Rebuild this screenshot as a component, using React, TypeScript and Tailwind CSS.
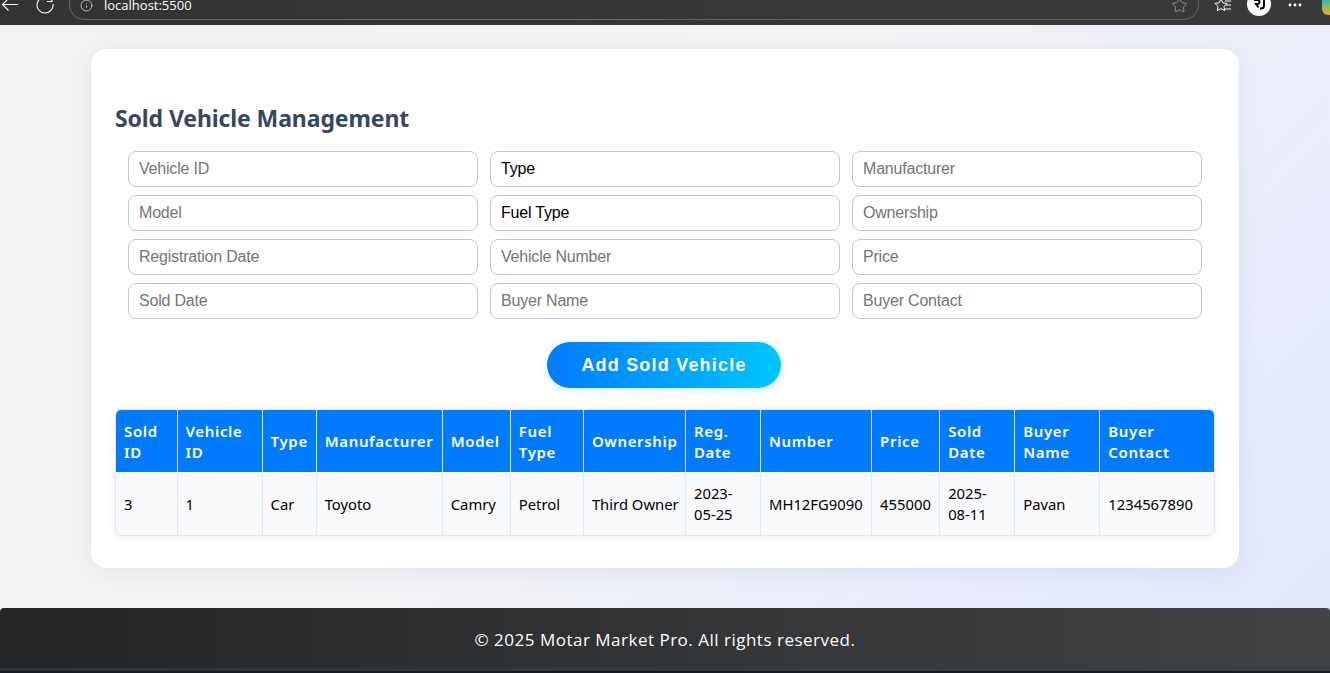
import { Info, Star } from "lucide-react";

const fields = [
  { label: "Vehicle ID" },
  { label: "Type", select: true },
  { label: "Manufacturer" },
  { label: "Model" },
  { label: "Fuel Type", select: true },
  { label: "Ownership" },
  { label: "Registration Date" },
  { label: "Vehicle Number" },
  { label: "Price" },
  { label: "Sold Date" },
  { label: "Buyer Name" },
  { label: "Buyer Contact" },
];

const columns = [
  { label: "Sold ID", value: "3", width: "w-[61px]" },
  { label: "Vehicle ID", value: "1", width: "w-[85px]" },
  { label: "Type", value: "Car", width: "w-[54px]" },
  { label: "Manufacturer", value: "Toyoto", width: "w-[126px]" },
  { label: "Model", value: "Camry", width: "w-[68px]" },
  { label: "Fuel Type", value: "Petrol", width: "w-[73px]" },
  { label: "Ownership", value: "Third\u00a0Owner", width: "w-[102px]" },
  { label: "Reg. Date", value: "2023-05-25", width: "w-[75px]" },
  { label: "Number", value: "MH12FG9090", width: "w-[111px]" },
  { label: "Price", value: "455000", width: "w-[68px]" },
  { label: "Sold Date", value: "2025-08-11", width: "w-[75px]" },
  { label: "Buyer Name", value: "Pavan", width: "w-[85px]" },
  { label: "Buyer Contact", value: "1234567890", width: "w-[114px]" },
];

function TopBar() {
  return (
    <div className="flex h-[25px] items-start overflow-hidden bg-[linear-gradient(90deg,#333333,#3a3a3a)] text-white">
      <svg className="ml-[1px] h-[12px] w-[18px]" viewBox="0 0 18 12" fill="none" stroke="white" strokeWidth="1.1">
        <path d="M17 4.5H1.5M7.5-1.5l-6 6 6 6" />
      </svg>
      <svg className="ml-[17px] h-[14px] w-[18px]" viewBox="0 0 18 14" fill="none" stroke="white" strokeWidth="1.1">
        <path d="M17 4A8 8 0 1 1 12-2.4M11 1.5h5V-3" />
      </svg>
      <div className="mt-[-10px] ml-[15px] flex h-[30px] w-[1130px] items-center rounded-b-[15px] border border-[#666666] px-[10px]">
        <Info className="mt-[1px] h-[13px] w-[13px] text-[#d8d8d8]" strokeWidth={1.5} />
        <span className="mt-[1px] ml-[11px] font-['Open_Sans',sans-serif] text-[13px] leading-none">localhost:5500</span>
        <Star className="mt-[1px] ml-auto h-[17px] w-[17px] text-[#9a9a9a]" strokeWidth={1.2} />
      </div>
      <svg className="ml-[15px] h-[14px] w-[18px]" viewBox="0 0 18 14" fill="none" stroke="white" strokeWidth="1">
        <path d="M7 -1l1.8 3.8 4.2.6-3 3 .7 4.2L7 8.6l-3.7 2 .7-4.2-3-3 4.2-.6z" />
        <path d="M11 1h6M12 5h5M11 9h6" />
      </svg>
      <div className="mt-[-8px] ml-[15px] flex h-[24px] w-[24px] items-center justify-center rounded-full bg-white">
        <svg className="mt-[1px] h-[13px] w-[13px]" viewBox="0 0 13 13" fill="none" stroke="black" strokeWidth="1.9">
          <path d="M1 2h3.5a2 2 0 0 1 0 4H3l2.5 3.5M11 1v6.5a3 3 0 0 1-3 3H7" />
        </svg>
      </div>
      <svg className="mt-[3px] ml-[17px] h-[4px] w-[14px]" viewBox="0 0 14 4" fill="white">
        <circle cx="2" cy="2" r="1.4" />
        <circle cx="7" cy="2" r="1.4" />
        <circle cx="12" cy="2" r="1.4" />
      </svg>
      <div className="ml-auto h-[15px] w-[8px] rounded-bl-[6px] bg-[linear-gradient(180deg,#3fb6b0_0%,#86c14a_45%,#f2a23a_100%)]" />
    </div>
  );
}

function Field({ label, select }: { label: string; select?: boolean }) {
  const cls =
    "h-9 w-full appearance-none rounded-[8px] border border-[#bcc7da] bg-white px-[10px] font-['Liberation_Sans',Arial,sans-serif] text-base tracking-[-0.2px] text-black outline-none placeholder:text-[#757575]";
  if (select) {
    return (
      <select className={cls} defaultValue={label}>
        <option>{label}</option>
      </select>
    );
  }
  return <input className={cls} placeholder={label} />;
}

export default function App() {
  return (
    <div className="flex h-[673px] flex-col overflow-hidden bg-[#0f1c2e] font-['Open_Sans','Noto_Sans',sans-serif]">
      <TopBar />
      <main className="h-[646px] bg-[linear-gradient(135deg,#f2f2f2_0%,#f3f3f4_45%,#e0e7ff_100%)]">
        <div className="mx-auto mt-6 w-[1148px] rounded-2xl bg-white px-6 pt-[44px] pb-8 shadow-[0_4px_24px_rgba(60,80,140,0.08)]">
          <h2 className="font-['Noto_Sans',sans-serif] text-[23px] leading-[50px] font-bold tracking-[-0.1px] text-[#34495e]">
            Sold Vehicle Management
          </h2>
          <div className="mx-[13px] mt-[8px] grid grid-cols-3 gap-x-3 gap-y-2">
            {fields.map((f) => (
              <Field key={f.label} label={f.label} select={f.select} />
            ))}
          </div>
          <div className="mt-[23px] flex justify-center pr-[2px]">
            <button className="h-[46px] w-[234px] rounded-full bg-[linear-gradient(90deg,#007bff,#00c6ff)] font-['Liberation_Sans',Arial,sans-serif] text-lg font-bold tracking-[1.2px] text-white shadow-[0_2px_8px_rgba(0,123,255,0.15)]">
              Add Sold Vehicle
            </button>
          </div>
          <div className="mt-[21px] overflow-hidden rounded-[6px] border border-[#e3e7ef] shadow-[0_2px_8px_rgba(0,0,0,0.06)]">
            <table className="w-full table-fixed border-collapse font-['Noto_Sans',sans-serif]">
              <thead>
                <tr className="h-[62px] bg-[#007bff] text-white">
                  {columns.map((c) => (
                    <th
                      key={c.label}
                      className={`${c.width} border-r border-[#e3e7ef] px-2 pt-[1px] text-left text-[15px] leading-[21px] font-semibold tracking-[0.65px] last:border-r-0`}
                    >
                      {c.label}
                    </th>
                  ))}
                </tr>
              </thead>
              <tbody>
                <tr className="h-[63px] bg-[#f8f9fb] text-black">
                  {columns.map((c) => (
                    <td
                      key={c.label}
                      className="border-r border-[#e3e7ef] px-2 pt-[1px] text-[14.8px] leading-[21px] last:border-r-0"
                    >
                      {c.value}
                    </td>
                  ))}
                </tr>
              </tbody>
            </table>
          </div>
        </div>
        <footer className="mt-10 flex h-[60px] items-center justify-center rounded-t-[4px] bg-[linear-gradient(90deg,#232526,#414345)] pt-[3px] text-[17px] tracking-[0.5px] text-white">
          © 2025 Motar Market Pro. All rights reserved.
        </footer>
        <div className="h-[3px] bg-[linear-gradient(90deg,#333333,#3f3f3f)]" />
      </main>
    </div>
  );
}
